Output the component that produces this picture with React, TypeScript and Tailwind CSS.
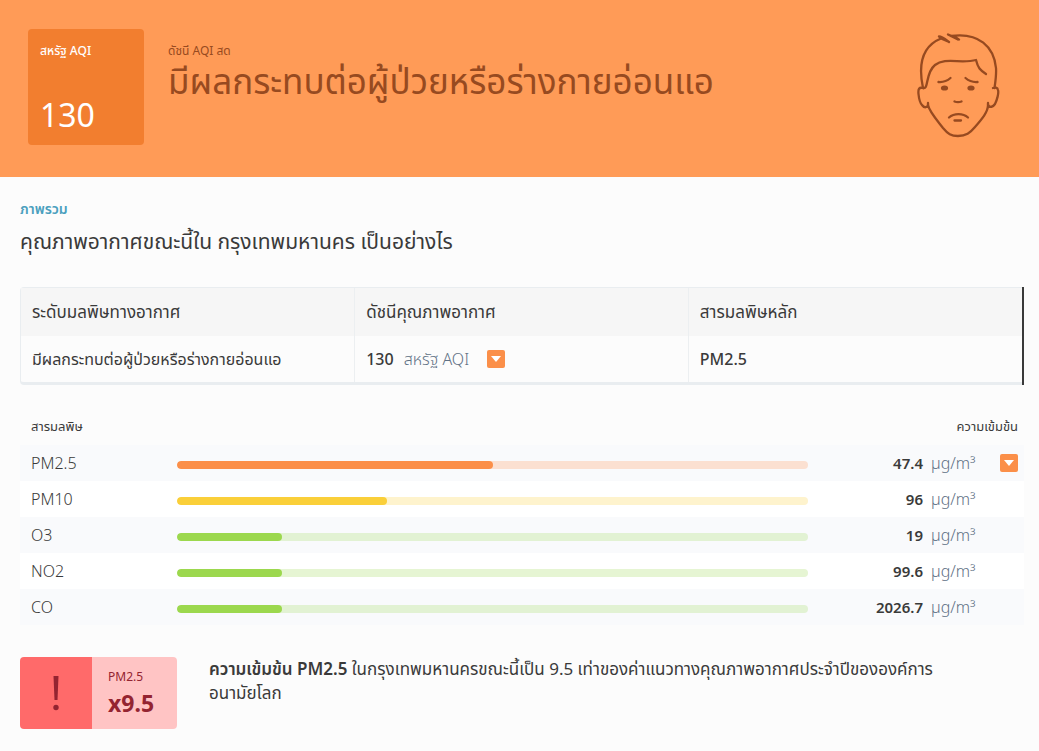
import React from 'react'

type Pollutant = {
  name: string
  value: string
  percent: number
  bar: string
  track: string
  expandable?: boolean
}

const POLLUTANTS: Pollutant[] = [
  { name: 'PM2.5', value: '47.4', percent: 50, bar: 'bg-[#fb8f49]', track: 'bg-[#fbe0d1]', expandable: true },
  { name: 'PM10', value: '96', percent: 33.33, bar: 'bg-[#facf39]', track: 'bg-[#fef3cd]' },
  { name: 'O3', value: '19', percent: 16.67, bar: 'bg-[#9cd84e]', track: 'bg-[#e2f2d3]' },
  { name: 'NO2', value: '99.6', percent: 16.67, bar: 'bg-[#9cd84e]', track: 'bg-[#e6f5d3]' },
  { name: 'CO', value: '2026.7', percent: 16.67, bar: 'bg-[#9cd84e]', track: 'bg-[#e2f2d3]' },
]

function FaceIcon() {
  return (
    <svg width="84" height="106" viewBox="0 0 84 106" fill="none" stroke="#974a20" strokeWidth="2.3" strokeLinecap="round" strokeLinejoin="round" aria-hidden="true">
      {/* hair */}
      <path d="M6 55C2 36 3 14 24 5.500L31 8.500M22 3.500L24 5.500M22 3.500C25 3.500 28 6 32 9M31 1.500L41 6.500M31 1.500C35 3.500 38 3 42 6.500M34 3C62-1 77 14 79 35C79.500 42 78.500 48 77.500 55" />
      <path d="M6 55C12 57 8 40 18 32C28 24 44 31 59 27C61 35 63 37 69 41" />
      {/* ears and jaw */}
      <path d="M6 55C2 54 1 56 1.500 61C2 66 3 70 5 72C7 75 10 75 11 72C12 78 19 86 26 95C31 101 34 103 41 103C49 103 53 100 58 94C65 86 71 79 71 72C73 75 76 74 78 71C80 67 82 60 81 57C80.500 54 78 54.500 76 55" />
      <path d="M11 72V70M71 72V70" />
      {/* brows, nose and mouth */}
      <path d="M21.500 49C27 49.500 30 48 33.500 45M48.500 45C52 48 55 49.500 60.500 49M37.500 68.500C40 69.500 42 69.500 44.500 68.500M32 84.500C37 80 46 80 51 84.500M37.500 87.500H44" />
      <ellipse cx="27.500" cy="55" rx="3.600" ry="2.600" fill="#974a20" stroke="none" />
      <ellipse cx="54" cy="55" rx="3.600" ry="2.600" fill="#974a20" stroke="none" />
    </svg>
  )
}

function ArrowButton({ label }: { label: string }) {
  return (
    <button type="button" aria-label={label} className="flex h-[18px] w-[18px] items-center justify-center rounded-xs bg-[#fb8f49]">
      <svg width="10" height="6" viewBox="0 0 10 6" aria-hidden="true">
        <path d="M0 0H10L5 6Z" fill="#fff" />
      </svg>
    </button>
  )
}

function Hero() {
  return (
    <header className="flex h-[177px] items-start gap-6 bg-[#ff9b57] pt-[29px] pr-[38px] pl-7 text-[#974a20]">
      <div className="flex h-[116px] w-[116px] shrink-0 flex-col justify-between rounded-sm bg-[#f27e2f] px-3 pt-3 pb-2 text-white">
        <p className="text-xs leading-5 font-medium">สหรัฐ AQI</p>
        <p className="text-[32px] leading-11">130</p>
      </div>
      <div className="min-w-0 grow pt-3">
        <p className="text-xs leading-5">ดัชนี AQI สด</p>
        <h1 className="text-[35px] leading-10">มีผลกระทบต่อผู้ป่วยหรือร่างกายอ่อนแอ</h1>
      </div>
      <div className="shrink-0 pt-1">
        <FaceIcon />
      </div>
    </header>
  )
}

function Overview() {
  return (
    <section>
      <p className="text-sm leading-5 font-semibold text-[#4a9fbe]">ภาพรวม</p>
      <h2 className="mt-2 text-[21px] leading-7">คุณภาพอากาศขณะนี้ใน กรุงเทพมหานคร เป็นอย่างไร</h2>
      <div className="mt-8 border-r-2 border-[#3a3a3a]">
        <div className="rounded-l-sm border border-r-0 border-b-3 border-[#e9edf0]">
          <table className="w-full table-fixed border-collapse text-left text-base">
            <thead>
              <tr className="h-12 bg-[#f6f6f6] text-[17px]">
                <th className="border-r border-[#eceff1] px-[11px] font-normal">ระดับมลพิษทางอากาศ</th>
                <th className="border-r border-[#eceff1] px-[11px] font-normal">ดัชนีคุณภาพอากาศ</th>
                <th className="px-[11px] font-normal">สารมลพิษหลัก</th>
              </tr>
            </thead>
            <tbody>
              <tr className="h-[46px]">
                <td className="border-r border-[#eceff1] px-[11px]">มีผลกระทบต่อผู้ป่วยหรือร่างกายอ่อนแอ</td>
                <td className="border-r border-[#eceff1] px-[11px]">
                  <div className="flex items-center">
                    <span className="mr-2.5 font-medium">130</span>
                    <span className="mr-4.5 font-light text-[#5f7185]">สหรัฐ AQI</span>
                    <ArrowButton label="สหรัฐ AQI" />
                  </div>
                </td>
                <td className="px-[11px] font-medium">PM2.5</td>
              </tr>
            </tbody>
          </table>
        </div>
      </div>
    </section>
  )
}

function PollutantTable() {
  return (
    <table className="mt-6 w-full table-fixed border-collapse text-base">
      <colgroup>
        <col className="w-[157px]" />
        <col />
        <col className="w-[115px]" />
        <col className="w-[101px]" />
      </colgroup>
      <thead>
        <tr className="h-9 text-[13px]">
          <th className="pl-[11px] text-left font-normal">สารมลพิษ</th>
          <th></th>
          <th colSpan={2} className="pr-1.5 text-right font-normal">ความเข้มข้น</th>
        </tr>
      </thead>
      <tbody>
        {POLLUTANTS.map(p => (
          <tr key={p.name} className="h-9 odd:bg-[#f9fafc] even:bg-white">
            <td className="pl-[11px] font-light">{p.name}</td>
            <td className="pt-1">
              <div className={`h-2 overflow-hidden rounded-full ${p.track}`}>
                <div className={`h-2 rounded-full ${p.bar}`} style={{ width: `${p.percent}%` }} />
              </div>
            </td>
            <td className="text-right text-[15px] font-semibold">{p.value}</td>
            <td className="pr-1.5 pl-2">
              <div className="flex items-center justify-between font-light text-[#5f7185]">
                <span>µg/m³</span>
                {p.expandable && <ArrowButton label={p.name} />}
              </div>
            </td>
          </tr>
        ))}
      </tbody>
    </table>
  )
}

function Guideline() {
  return (
    <section className="mt-8 flex items-start gap-8">
      <div className="flex h-[72px] w-[157px] shrink-0 overflow-hidden rounded-sm text-[#942431]">
        <div className="flex w-[72px] items-center justify-center bg-[#ff6a6a]">
          <svg width="8" height="36" viewBox="0 0 8 36" fill="#942431" aria-hidden="true">
            <path d="M1.500 1H6.500L5.500 25H2.500Z" />
            <circle cx="4" cy="32.500" r="2.700" />
          </svg>
        </div>
        <div className="grow bg-[#ffc4c4] pt-2.5 pl-4">
          <p className="text-xs leading-5">PM2.5</p>
          <p className="text-[23px] leading-8 font-bold">x9.5</p>
        </div>
      </div>
      <p className="max-w-[740px] text-[17px] leading-6">
        <strong className="font-semibold">ความเข้มข้น PM2.5</strong> ในกรุงเทพมหานครขณะนี้เป็น 9.5 เท่าของค่าแนวทางคุณภาพอากาศประจำปีขององค์การอนามัยโลก
      </p>
    </section>
  )
}

export default function App() {
  return (
    <div className="min-h-screen bg-[#fcfcfc] font-['Noto_Sans','Noto_Sans_Thai',sans-serif] text-[#3a3a3a]">
      <Hero />
      <main className="pt-5.5 pr-[15px] pb-5 pl-5">
        <Overview />
        <PollutantTable />
        <Guideline />
      </main>
    </div>
  )
}
